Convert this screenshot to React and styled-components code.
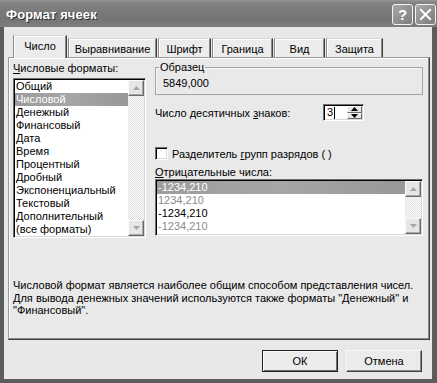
import React from "react";
import styled, { createGlobalStyle } from "styled-components";

const Global = createGlobalStyle`
  html, body { margin: 0; padding: 0; background: #fff; }
  body {
    font-family: "Liberation Sans", Arial, sans-serif;
    font-size: 11px;
    color: #000;
  }
  * { box-sizing: border-box; }
`;

const Window = styled.div`
  width: 437px;
  height: 383px;
  display: flex;
  flex-direction: column;
  background: #5c5c5c;
  padding: 0 5px 4px 4px;
`;

const TitleBar = styled.div`
  height: 27px;
  margin: 0 -5px 0 -4px;
  padding: 0 1px 0 6px;
  display: flex;
  align-items: center;
  justify-content: space-between;
  background: linear-gradient(#9a9a9a 0, #858585 2px, #7a7a7a 40%, #747474 70%, #7e7e7e 100%);
`;

const Title = styled.div`
  font-family: "Liberation Sans", Arial, sans-serif;
  font-weight: bold;
  font-size: 13px;
  color: #fff;
  text-shadow: 1px 1px 0 #2e2e2e;
  letter-spacing: 0.1px;
  padding-top: 1px;
`;

const TitleButtons = styled.div`
  display: flex;
  gap: 2px;
  padding-top: 1px;
`;

const TitleButton = styled.div`
  width: 21px;
  height: 21px;
  border: 1px solid #f4f4f4;
  border-radius: 3px;
  background: linear-gradient(135deg, #a8a8a8, #7c7c7c);
  display: flex;
  align-items: center;
  justify-content: center;
  color: #fff;
  font-weight: bold;
  font-size: 15px;
`;

const Body = styled.div`
  flex: 1;
  background: #e8e8e8;
  display: flex;
  flex-direction: column;
  padding: 8px 2px 0 4px;
`;

const TabStrip = styled.div`
  display: flex;
  align-items: flex-end;
  height: 22px;
  padding-left: 5px;
  position: relative;
  z-index: 1;
`;

const Tab = styled.div`
  height: ${(p) => (p.$active ? "23px" : "19px")};
  width: ${(p) => p.$w}px;
  margin-bottom: ${(p) => (p.$active ? "-1px" : "0")};
  margin-right: ${(p) => (p.$active ? "1px" : "1px")};
  background: ${(p) => (p.$active ? "#ebebeb" : "#ececec")};
  border-top: 1px solid #d6d6d6;
  border-left: 1px solid #8c8c8c;
  border-right: 1px solid #3e3e3e;
  box-shadow: inset -1px 0 #8c8c8c, inset 1px 1px #fff;
  display: flex;
  align-items: center;
  justify-content: center;
  padding-top: ${(p) => (p.$active ? "0" : "1px")};
  padding-bottom: ${(p) => (p.$active ? "3px" : "0")};
  white-space: nowrap;
`;

const Panel = styled.div`
  height: 283px;
  margin-right: 0;
  border-top: 1px solid #9a9a9a;
  border-left: 1px solid #9a9a9a;
  border-right: 1px solid #3e3e3e;
  border-bottom: 1px solid #3e3e3e;
  box-shadow: inset -1px -1px #8c8c8c, inset 1px 1px #fff;
  background: #e9e9e9;
  padding: 3px 6px 0 4px;
  display: flex;
  flex-direction: column;
`;

const Columns = styled.div`
  display: grid;
  grid-template-columns: 133px 268px;
  column-gap: 9px;
`;

const Column = styled.div`
  display: flex;
  flex-direction: column;
`;

const Label = styled.div`
  line-height: 13px;
  height: 13px;
  white-space: nowrap;
  margin-top: ${(p) => p.$mt || 0}px;
`;

const U = styled.span`
  text-decoration: underline;
  text-underline-offset: 1px;
`;

const ListBox = styled.div`
  margin-top: ${(p) => p.$mt || 0}px;
  height: ${(p) => p.$h}px;
  background: #fff;
  border-top: 1px solid #6e6e6e;
  border-left: 1px solid #6e6e6e;
  border-right: 1px solid #fff;
  border-bottom: 1px solid #fff;
  box-shadow: inset 1px 1px #000, inset -1px -1px #d8d8d8;
  padding: 1px;
  display: flex;
`;

const Items = styled.div`
  flex: 1;
  display: flex;
  flex-direction: column;
  min-width: 0;
`;

const Item = styled.div`
  height: 13px;
  line-height: 13px;
  padding-left: 1px;
  white-space: nowrap;
  color: ${(p) => (p.$sel ? "#fff" : p.$muted ? "#8a8a8a" : "#000")};
  background: ${(p) =>
    p.$sel ? "linear-gradient(90deg, #9c9c9c, #a6a6a6 50%, #989898)" : "transparent"};
`;

const ScrollBar = styled.div`
  width: 16px;
  display: flex;
  flex-direction: column;
  justify-content: space-between;
  background-color: #f2f2f2;
  background-image: repeating-conic-gradient(#ffffff 0 25%, #dedede 0 50%);
  background-size: 2px 2px;
`;

const ArrowButton = styled.div`
  width: 16px;
  height: 16px;
  background: #e6e6e6;
  border-top: 1px solid #fafafa;
  border-left: 1px solid #fafafa;
  border-right: 1px solid #6a6a6a;
  border-bottom: 1px solid #6a6a6a;
  box-shadow: inset -1px -1px #a8a8a8;
  display: flex;
  align-items: center;
  justify-content: center;
`;

const Arrow = ({ up, color = "#a4a4a4", w = 7 }) => (
  <svg width={w} height={Math.ceil(w / 2)} viewBox={`0 0 ${w} ${Math.ceil(w / 2)}`}>
    {up ? (
      <polygon points={`0,${Math.ceil(w / 2)} ${w},${Math.ceil(w / 2)} ${w / 2},0`} fill={color} />
    ) : (
      <polygon points={`0,0 ${w},0 ${w / 2},${Math.ceil(w / 2)}`} fill={color} />
    )}
  </svg>
);

const Group = styled.fieldset`
  margin: 0;
  padding: 3px 7px 3px 7px;
  border: 1px solid #a4a4a4;
  box-shadow: inset 1px 1px #f6f6f6;
  height: 34px;
  min-width: 0;
`;

const Legend = styled.legend`
  padding: 0 1px;
  margin-left: -4px;
  line-height: 13px;
`;

const Value = styled.div`
  line-height: 13px;
`;

const Row = styled.div`
  display: flex;
  align-items: center;
  margin-top: ${(p) => p.$mt || 0}px;
`;

const RowLabel = styled.div`
  width: 168px;
  white-space: nowrap;
`;

const SpinBox = styled.div`
  width: 41px;
  height: 17px;
  background: #fff;
  border-top: 1px solid #6e6e6e;
  border-left: 1px solid #6e6e6e;
  border-right: 1px solid #fff;
  border-bottom: 1px solid #fff;
  box-shadow: inset 1px 1px #000, inset -1px -1px #d8d8d8;
  display: flex;
  padding: 1px;
`;

const SpinText = styled.div`
  flex: 1;
  line-height: 13px;
  padding-left: 2px;
  display: flex;
  align-items: center;
`;

const Caret = styled.span`
  display: inline-block;
  width: 1px;
  height: 12px;
  background: #000;
  margin-left: 1px;
`;

const SpinButtons = styled.div`
  width: 15px;
  display: flex;
  flex-direction: column;
`;

const SpinButton = styled.div`
  flex: 1;
  background: #e6e6e6;
  border-top: 1px solid #fafafa;
  border-left: 1px solid #fafafa;
  border-right: 1px solid #6a6a6a;
  border-bottom: 1px solid #6a6a6a;
  display: flex;
  align-items: center;
  justify-content: center;
`;

const CheckBox = styled.div`
  width: 13px;
  height: 13px;
  background: #fff;
  border-top: 1px solid #6e6e6e;
  border-left: 1px solid #6e6e6e;
  border-right: 1px solid #fff;
  border-bottom: 1px solid #fff;
  box-shadow: inset 1px 1px #000, inset -1px -1px #d8d8d8;
  margin-right: 4px;
`;

const Description = styled.div`
  margin-top: 41px;
  line-height: 12.5px;
  white-space: nowrap;
`;

const ButtonRow = styled.div`
  display: flex;
  justify-content: flex-end;
  gap: 8px;
  padding: 10px 8px 0 0;
`;

const Button = styled.div`
  width: 76px;
  height: 22px;
  display: flex;
  align-items: center;
  justify-content: center;
  background: #ebebeb;
  border: 1px solid ${(p) => (p.$default ? "#1e1e1e" : "#f8f8f8")};
  border-right-color: ${(p) => (p.$default ? "#1e1e1e" : "#3e3e3e")};
  border-bottom-color: ${(p) => (p.$default ? "#1e1e1e" : "#3e3e3e")};
  box-shadow: ${(p) =>
    p.$default
      ? "inset 1px 1px #fafafa, inset -1px -1px #6e6e6e"
      : "inset -1px -1px #8c8c8c"};
`;

const tabs = [
  { t: "Число", w: 54, active: true },
  { t: "Выравнивание", w: 89 },
  { t: "Шрифт", w: 53 },
  { t: "Граница", w: 61 },
  { t: "Вид", w: 51 },
  { t: "Защита", w: 57 },
];

const formats = [
  "Общий",
  "Числовой",
  "Денежный",
  "Финансовый",
  "Дата",
  "Время",
  "Процентный",
  "Дробный",
  "Экспоненциальный",
  "Текстовый",
  "Дополнительный",
  "(все форматы)",
];

const negatives = [
  { t: "-1234,210", sel: true },
  { t: "1234,210", muted: true },
  { t: "-1234,210" },
  { t: "-1234,210", muted: true },
];

function Scroll() {
  return (
    <ScrollBar>
      <ArrowButton>
        <Arrow up />
      </ArrowButton>
      <ArrowButton>
        <Arrow />
      </ArrowButton>
    </ScrollBar>
  );
}

export default function App() {
  return (
    <>
      <Global />
      <Window>
        <TitleBar>
          <Title>Формат ячеек</Title>
          <TitleButtons>
            <TitleButton>?</TitleButton>
            <TitleButton>
              <svg width="13" height="13" viewBox="0 0 13 13">
                <path d="M2 2 L11 11 M11 2 L2 11" stroke="#fff" strokeWidth="2" strokeLinecap="square" />
              </svg>
            </TitleButton>
          </TitleButtons>
        </TitleBar>
        <Body>
          <TabStrip>
            {tabs.map((t) => (
              <Tab key={t.t} $w={t.w} $active={t.active}>
                {t.t}
              </Tab>
            ))}
          </TabStrip>
          <Panel>
            <Columns>
              <Column>
                <Label $mt={1}>
                  <U>Ч</U>исловые форматы:
                </Label>
                <ListBox $mt={3} $h={160}>
                  <Items>
                    {formats.map((f, i) => (
                      <Item key={f} $sel={i === 1}>
                        {f}
                      </Item>
                    ))}
                  </Items>
                  <Scroll />
                </ListBox>
              </Column>
              <Column>
                <Group>
                  <Legend>Образец</Legend>
                  <Value>5849,000</Value>
                </Group>
                <Row $mt={9}>
                  <RowLabel>
                    Число десятичных <U>з</U>наков:
                  </RowLabel>
                  <SpinBox>
                    <SpinText>
                      3<Caret />
                    </SpinText>
                    <SpinButtons>
                      <SpinButton>
                        <Arrow up color="#000" w={7} />
                      </SpinButton>
                      <SpinButton>
                        <Arrow color="#000" w={7} />
                      </SpinButton>
                    </SpinButtons>
                  </SpinBox>
                </Row>
                <Row $mt={26}>
                  <CheckBox />
                  <span>
                    Разделитель <U>г</U>рупп разрядов ( )
                  </span>
                </Row>
                <Label $mt={6}>
                  <U>О</U>трицательные числа:
                </Label>
                <ListBox $h={57}>
                  <Items>
                    {negatives.map((n, i) => (
                      <Item key={i} $sel={n.sel} $muted={n.muted}>
                        {n.t}
                      </Item>
                    ))}
                  </Items>
                  <Scroll />
                </ListBox>
              </Column>
            </Columns>
            <Description>
              Числовой формат является наиболее общим способом представления чисел.
              <br />
              Для вывода денежных значений используются также форматы "Денежный" и
              <br />
              "Финансовый".
            </Description>
          </Panel>
          <ButtonRow>
            <Button $default>ОК</Button>
            <Button>Отмена</Button>
          </ButtonRow>
        </Body>
      </Window>
    </>
  );
}
